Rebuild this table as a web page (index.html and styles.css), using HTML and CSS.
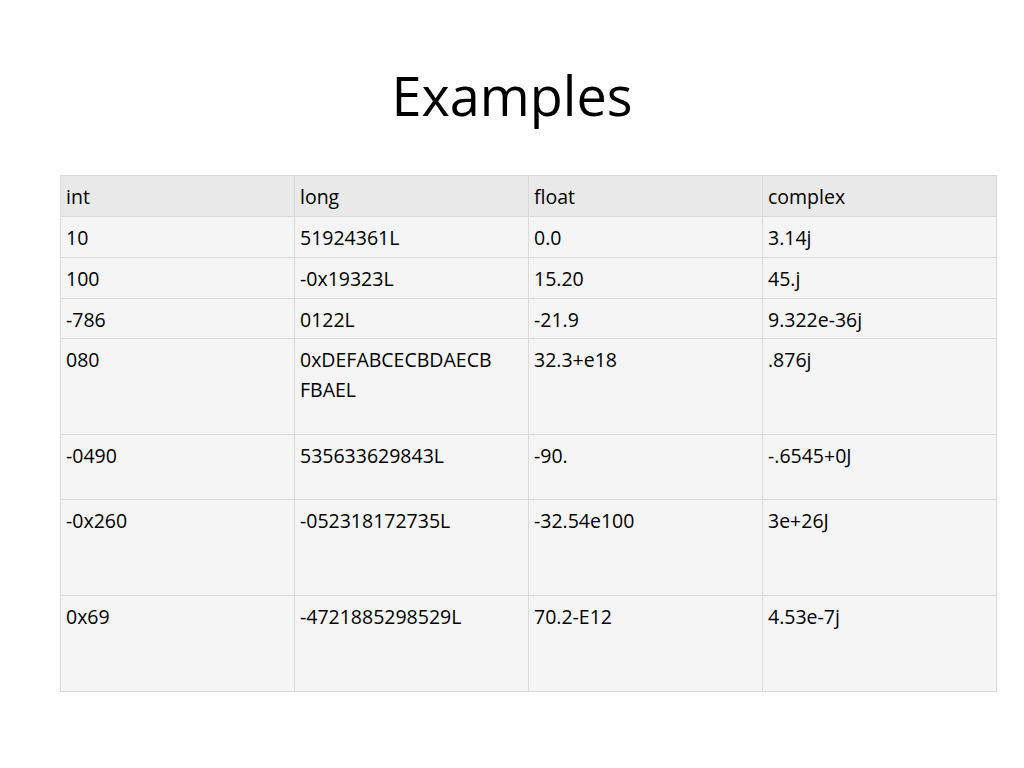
FILE: index.html
```html
<!DOCTYPE html>
<html>
<head>
<meta charset="utf-8">
<link rel="stylesheet" href="styles.css">
</head>
<body>
<div class="slide">
  <h1 class="title">Examples</h1>
  <table class="grid">
    <thead>
      <tr class="head"><th>int</th><th>long</th><th>float</th><th>complex</th></tr>
    </thead>
    <tbody>
      <tr class="r-sm"><td>10</td><td>51924361L</td><td>0.0</td><td>3.14j</td></tr>
      <tr class="r-sm"><td>100</td><td>-0x19323L</td><td>15.20</td><td>45.j</td></tr>
      <tr class="r-xs"><td>-786</td><td>0122L</td><td>-21.9</td><td>9.322e-36j</td></tr>
      <tr class="r-lg"><td>080</td><td>0xDEFABCECBDAECB<br>FBAEL</td><td>32.3+e18</td><td>.876j</td></tr>
      <tr class="r-md"><td>-0490</td><td>535633629843L</td><td>-90.</td><td>-.6545+0J</td></tr>
      <tr class="r-lg"><td>-0x260</td><td>-052318172735L</td><td>-32.54e100</td><td>3e+26J</td></tr>
      <tr class="r-lg"><td>0x69</td><td>-4721885298529L</td><td>70.2-E12</td><td>4.53e-7j</td></tr>
    </tbody>
  </table>
</div>
</body>
</html>
```

FILE: styles.css
```css
html, body {
  margin: 0;
  padding: 0;
  background: #ffffff;
}
.slide {
  width: 1024px;
  height: 768px;
  box-sizing: border-box;
  padding-top: 68px;
  font-family: "Open Sans", "Liberation Sans", sans-serif;
  color: #000;
}
.title {
  margin: 0;
  font-size: 54px;
  font-weight: 400;
  line-height: 55px;
  text-align: center;
}
.grid {
  margin: 52px 0 0 60px;
  border-collapse: collapse;
  table-layout: fixed;
  width: 937px;
}
.grid th, .grid td {
  border: 1px solid #dadada;
  padding: 6px 5px 0 5px;
  vertical-align: top;
  text-align: left;
  font-size: 19.5px;
  font-weight: 400;
  line-height: 30px;
  box-sizing: border-box;
}
.grid th {
  background: #e9e9e9;
}
.grid td {
  background: #f5f5f5;
}
.head th { height: 41px; }
.r-sm td { height: 41px; }
.r-xs td { height: 40px; }
.r-md td { height: 65px; }
.r-lg td { height: 96px; }
```
